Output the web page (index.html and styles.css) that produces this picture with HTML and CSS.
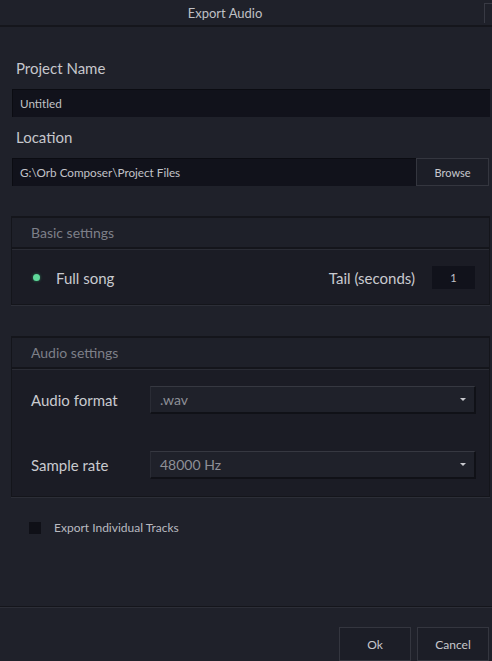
FILE: index.html
```html
<!DOCTYPE html>
<html>
<head>
<meta charset="utf-8">
<link rel="stylesheet" href="styles.css">
</head>
<body>
<div class="window">
  <div class="titlebar">
    <span class="title">Export Audio</span>
    <span class="tb-box"></span>
  </div>
  <div class="content">
    <div class="label first">Project Name</div>
    <div class="field name-field">Untitled</div>
    <div class="label">Location</div>
    <div class="loc-row">
      <div class="field loc-field">G:\Orb Composer\Project Files</div>
      <div class="btn browse">Browse</div>
    </div>

    <div class="panel basic">
      <div class="panel-head">Basic settings</div>
      <div class="panel-body basic-body">
        <span class="radio"></span>
        <span class="opt">Full song</span>
        <span class="spacer"></span>
        <span class="opt">Tail (seconds)</span>
        <span class="num">1</span>
      </div>
    </div>

    <div class="panel audio">
      <div class="panel-head">Audio settings</div>
      <div class="panel-body audio-body">
        <div class="row">
          <span class="opt rowlabel">Audio format</span>
          <div class="select"><span>.wav</span><span class="caret"></span></div>
        </div>
        <div class="row">
          <span class="opt rowlabel">Sample rate</span>
          <div class="select"><span>48000 Hz</span><span class="caret"></span></div>
        </div>
      </div>
    </div>

    <div class="check-row">
      <span class="check"></span>
      <span class="check-label">Export Individual Tracks</span>
    </div>
  </div>
  <div class="footer">
    <div class="btn foot-btn">Ok</div>
    <div class="btn foot-btn">Cancel</div>
  </div>
</div>
</body>
</html>
```

FILE: styles.css
```css
html, body {
  margin: 0;
  padding: 0;
  background: #1f212a;
  font-family: Lato, "Open Sans", sans-serif;
}
.window {
  width: 492px;
  height: 661px;
  display: flex;
  flex-direction: column;
  background: #1f212a;
  overflow: hidden;
}
.titlebar {
  height: 25px;
  border-bottom: 2px solid #15161c;
  background: #1f212a;
  display: flex;
  align-items: center;
  justify-content: center;
  position: relative;
}
.title {
  color: #bfc0c5;
  font-size: 13px;
  margin-left: -42px;
}
.tb-box {
  position: absolute;
  right: 0;
  top: 3px;
  width: 7px;
  height: 19px;
  border-left: 1px solid #383a44;
  border-top: 1px solid #383a44;
}
.content {
  flex: 1;
  display: flex;
  flex-direction: column;
  padding: 0 2px 0 12px;
}
.label {
  color: #c6c7cc;
  font-size: 15px;
  padding-left: 4px;
  height: 20px;
  line-height: 20px;
  margin-top: 10px;
  margin-bottom: 11px;
}
.label.first {
  margin-top: 31px;
}
.field {
  background: #11121b;
  color: #c2c3c8;
  font-size: 11.7px;
  height: 28px;
  line-height: 28px;
  padding-left: 8px;
  box-sizing: border-box;
  box-shadow: inset 1px 1px 0 #0b0c12;
}
.name-field {
  width: 478px;
}
.loc-row {
  display: flex;
  height: 28px;
}
.loc-field {
  width: 404px;
}
.btn {
  background: #1c1e27;
  border: 1px solid #34363f;
  box-sizing: border-box;
  color: #c8c9ce;
  font-size: 11px;
  display: flex;
  align-items: center;
  justify-content: center;
}
.browse {
  width: 73px;
  height: 28px;
}
.panel {
  width: 479px;
  margin-left: -1px;
  box-sizing: border-box;
  border: 1px solid #14151b;
  border-top: 2px solid #14151b;
  background: #1b1c25;
  box-shadow: 0 1px 0 #2c2e37;
}
.basic {
  margin-top: 30px;
  height: 89px;
}
.audio {
  margin-top: 31px;
  height: 161px;
}
.panel-head {
  height: 29px;
  line-height: 29px;
  color: #7d7f88;
  font-size: 14px;
  padding-left: 19px;
  border-bottom: 2px solid #14151b;
  box-shadow: 0 1px 0 #2a2c35;
  background: #1e2029;
}
.panel-body {
  padding-left: 19px;
}
.basic-body {
  display: flex;
  align-items: center;
  height: 57px;
  padding-right: 14px;
}
.radio {
  width: 7px;
  height: 7px;
  border-radius: 50%;
  background: #5fd89a;
  box-shadow: 0 0 3px #2b7a54;
  margin-left: 2px;
  margin-right: 16px;
}
.opt {
  color: #c9cacf;
  font-size: 15px;
}
.spacer {
  flex: 1;
}
.num {
  width: 43px;
  height: 23px;
  line-height: 23px;
  margin-left: 17px;
  background: #11121b;
  color: #c2c3c8;
  font-size: 11px;
  text-align: center;
}
.audio-body {
  display: flex;
  flex-direction: column;
  padding-top: 17px;
  gap: 37px;
  padding-right: 13px;
}
.row {
  display: flex;
  align-items: center;
  height: 28px;
}
.rowlabel {
  width: 119px;
}
.select {
  flex: 1;
  height: 28px;
  box-sizing: border-box;
  background: #1f212a;
  border-top: 1px solid #363841;
  border-bottom: 2px solid #101117;
  border-right: 2px solid #101117;
  border-left: 1px solid #2a2c35;
  display: flex;
  align-items: center;
  justify-content: space-between;
  padding: 0 8px 0 9px;
  color: #8e9097;
  font-size: 14px;
}
.caret {
  width: 0;
  height: 0;
  border-left: 3px solid transparent;
  border-right: 3px solid transparent;
  border-top: 3px solid #c8c9ce;
}
.check-row {
  display: flex;
  align-items: center;
  margin-top: 23px;
  padding-left: 17px;
}
.check {
  width: 12px;
  height: 12px;
  background: #0f1017;
  margin-right: 13px;
}
.check-label {
  color: #b9bac0;
  font-size: 12px;
}
.footer {
  border-top: 1px solid #14151b;
  box-shadow: inset 0 1px 0 #2c2e37;
  height: 54px;
  display: flex;
  justify-content: flex-end;
  align-items: flex-end;
  gap: 6px;
  padding-right: 3px;
}
.foot-btn {
  width: 72px;
  height: 34px;
  font-size: 12px;
}
```
